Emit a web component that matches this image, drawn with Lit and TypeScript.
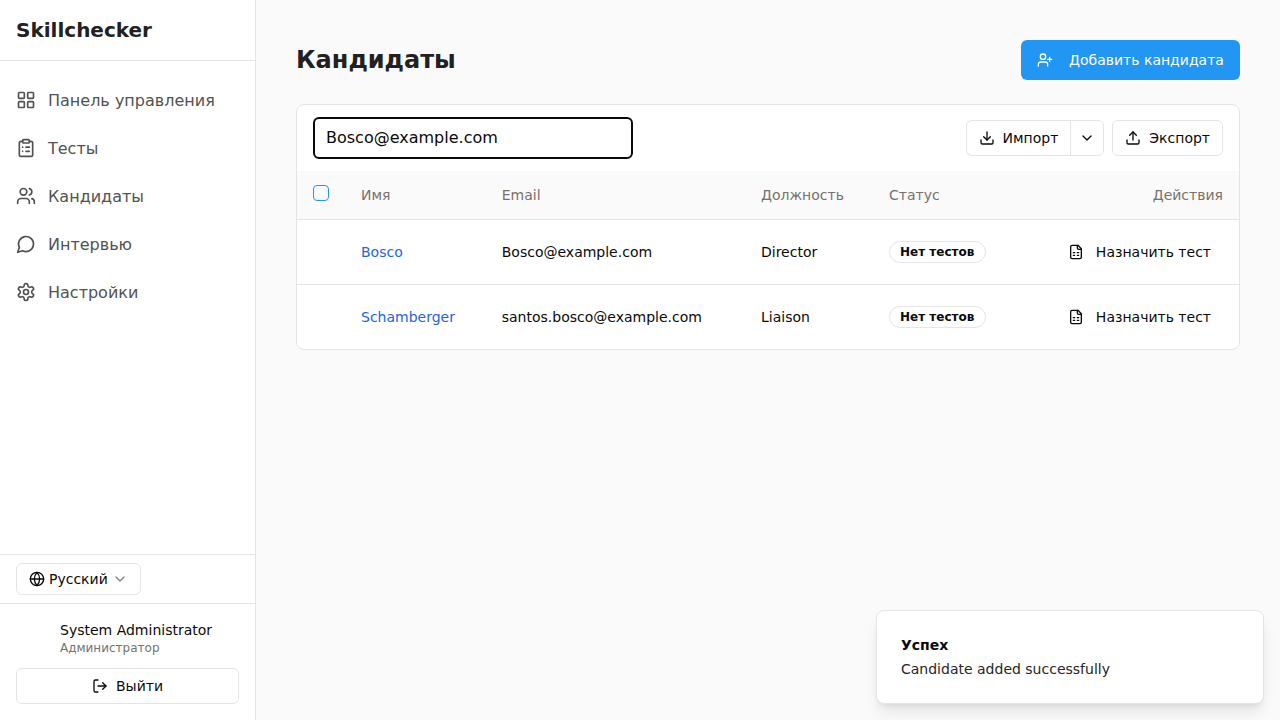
import { LitElement, css, html, svg } from "lit";
import { customElement } from "lit/decorators.js";

const icon = (body: unknown, size = 20) => html`<svg
  class="icon"
  width=${size}
  height=${size}
  viewBox="0 0 24 24"
  fill="none"
  stroke="currentColor"
  stroke-width="2"
  stroke-linecap="round"
  stroke-linejoin="round"
>${body}</svg>`;

const icons = {
  grid: svg`<rect x="3" y="3" width="7" height="7" rx="1"/><rect x="14" y="3" width="7" height="7" rx="1"/><rect x="3" y="14" width="7" height="7" rx="1"/><rect x="14" y="14" width="7" height="7" rx="1"/>`,
  clipboard: svg`<rect x="8" y="2" width="8" height="4" rx="1"/><path d="M16 4h2a2 2 0 0 1 2 2v14a2 2 0 0 1-2 2H6a2 2 0 0 1-2-2V6a2 2 0 0 1 2-2h2"/><path d="M12 11h4M12 16h4M8 11h.01M8 16h.01"/>`,
  users: svg`<path d="M16 21v-2a4 4 0 0 0-4-4H6a4 4 0 0 0-4 4v2"/><circle cx="9" cy="7" r="4"/><path d="M22 21v-2a4 4 0 0 0-3-3.87"/><path d="M16 3.13a4 4 0 0 1 0 7.75"/>`,
  chat: svg`<path d="M7.9 20A9 9 0 1 0 4 16.1L2 22Z"/>`,
  gear: svg`<path d="M12.22 2h-.44a2 2 0 0 0-2 2v.18a2 2 0 0 1-1 1.73l-.43.25a2 2 0 0 1-2 0l-.15-.08a2 2 0 0 0-2.73.73l-.22.38a2 2 0 0 0 .73 2.73l.15.1a2 2 0 0 1 1 1.72v.51a2 2 0 0 1-1 1.74l-.15.09a2 2 0 0 0-.73 2.73l.22.38a2 2 0 0 0 2.73.73l.15-.08a2 2 0 0 1 2 0l.43.25a2 2 0 0 1 1 1.73V20a2 2 0 0 0 2 2h.44a2 2 0 0 0 2-2v-.18a2 2 0 0 1 1-1.73l.43-.25a2 2 0 0 1 2 0l.15.08a2 2 0 0 0 2.73-.73l.22-.39a2 2 0 0 0-.73-2.73l-.15-.08a2 2 0 0 1-1-1.74v-.5a2 2 0 0 1 1-1.74l.15-.09a2 2 0 0 0 .73-2.73l-.22-.38a2 2 0 0 0-2.73-.73l-.15.08a2 2 0 0 1-2 0l-.43-.25a2 2 0 0 1-1-1.73V4a2 2 0 0 0-2-2z"/><circle cx="12" cy="12" r="3"/>`,
  globe: svg`<circle cx="12" cy="12" r="10"/><path d="M2 12h20"/><path d="M12 2a15.3 15.3 0 0 1 4 10 15.3 15.3 0 0 1-4 10 15.3 15.3 0 0 1-4-10 15.3 15.3 0 0 1 4-10z"/>`,
  chevron: svg`<path d="m6 9 6 6 6-6"/>`,
  logout: svg`<path d="M9 21H5a2 2 0 0 1-2-2V5a2 2 0 0 1 2-2h4"/><path d="m16 17 5-5-5-5"/><path d="M21 12H9"/>`,
  userPlus: svg`<path d="M16 21v-2a4 4 0 0 0-4-4H6a4 4 0 0 0-4 4v2"/><circle cx="9" cy="7" r="4"/><path d="M19 8v6M22 11h-6"/>`,
  download: svg`<path d="M21 15v4a2 2 0 0 1-2 2H5a2 2 0 0 1-2-2v-4"/><path d="m7 10 5 5 5-5"/><path d="M12 15V3"/>`,
  upload: svg`<path d="M21 15v4a2 2 0 0 1-2 2H5a2 2 0 0 1-2-2v-4"/><path d="m17 8-5-5-5 5"/><path d="M12 3v12"/>`,
  sheet: svg`<path d="M15 2H6a2 2 0 0 0-2 2v16a2 2 0 0 0 2 2h12a2 2 0 0 0 2-2V7Z"/><path d="M14 2v4a2 2 0 0 0 2 2h4"/><path d="M8 13h2M14 13h2M8 17h2M14 17h2"/>`,
};

const NAV = [
  { label: "Панель управления", icon: icons.grid },
  { label: "Тесты", icon: icons.clipboard },
  { label: "Кандидаты", icon: icons.users },
  { label: "Интервью", icon: icons.chat },
  { label: "Настройки", icon: icons.gear },
];

const CANDIDATES = [
  { name: "Bosco", email: "Bosco@example.com", job: "Director" },
  { name: "Schamberger", email: "santos.bosco@example.com", job: "Liaison" },
];

@customElement("app-root")
export class AppRoot extends LitElement {
  static styles = css`
    :host {
      display: flex;
      height: 720px;
      overflow: hidden;
      position: relative;
      background: #fafafa;
      color: #0a0a0a;
      font-family: "DejaVu Sans", sans-serif;
      font-size: 14px;
    }

    .icon {
      flex: none;
      display: block;
    }

    button {
      font: inherit;
      color: inherit;
      background: #fff;
      cursor: pointer;
    }

    .sidebar {
      box-sizing: border-box;
      width: 256px;
      flex: none;
      display: flex;
      flex-direction: column;
      background: #fff;
      border-right: 1px solid #e5e5e5;
    }

    .brand {
      box-sizing: border-box;
      height: 61px;
      padding: 0 16px;
      display: flex;
      align-items: center;
      border-bottom: 1px solid #e5e5e5;
      font-size: 20px;
      font-weight: 700;
      color: #212121;
    }

    .nav {
      flex: 1;
      padding-top: 15px;
      display: flex;
      flex-direction: column;
    }

    .nav-item {
      height: 48px;
      padding: 0 16px;
      display: flex;
      align-items: center;
      gap: 12px;
      font-size: 16px;
      color: #525252;
    }

    .lang-row {
      box-sizing: border-box;
      height: 50px;
      padding: 0 16px;
      display: flex;
      align-items: center;
      border-top: 1px solid #e5e5e5;
      border-bottom: 1px solid #e5e5e5;
    }

    .lang {
      box-sizing: border-box;
      width: 125px;
      height: 32px;
      display: flex;
      align-items: center;
      padding: 0 12px;
      gap: 4px;
      border: 1px solid #e5e5e5;
      border-radius: 6px;
    }

    .lang .caret {
      opacity: 0.5;
    }

    .user {
      padding: 18px 16px 16px;
    }

    .user-name {
      padding-left: 44px;
      line-height: 17px;
    }

    .user-role {
      padding-left: 44px;
      margin-top: 1px;
      font-size: 12px;
      line-height: 16px;
      color: #737373;
    }

    .logout {
      box-sizing: border-box;
      width: 223px;
      height: 36px;
      margin-top: 12px;
      display: flex;
      align-items: center;
      justify-content: center;
      gap: 8px;
      border: 1px solid #e5e5e5;
      border-radius: 6px;
    }

    .main {
      flex: 1;
      min-width: 0;
      padding: 40px 40px 0;
    }

    .head {
      display: flex;
      align-items: center;
      justify-content: space-between;
      height: 40px;
      margin-bottom: 24px;
    }

    h1 {
      margin: 0;
      font-size: 24px;
      font-weight: 700;
      color: #212121;
    }

    .add {
      box-sizing: border-box;
      width: 219px;
      height: 40px;
      padding: 0 16px;
      display: flex;
      align-items: center;
      gap: 16px;
      color: #fff;
      background: #2196f3;
      border: 0;
      border-radius: 6px;
    }

    .card {
      background: #fff;
      border: 1px solid #e5e5e5;
      border-radius: 8px;
      overflow: hidden;
    }

    .toolbar {
      height: 66px;
      padding: 12px 16px 0;
      box-sizing: border-box;
      display: flex;
      justify-content: space-between;
    }

    .search {
      box-sizing: border-box;
      width: 320px;
      height: 42px;
      padding: 0 11px 2px;
      display: flex;
      align-items: center;
      border: 2px solid #0a0a0a;
      border-radius: 6px;
      font-size: 16px;
    }

    .actions {
      display: flex;
      gap: 8px;
      padding-top: 3px;
    }

    .btn-group {
      display: flex;
    }

    .btn {
      box-sizing: border-box;
      height: 36px;
      padding: 0 12px;
      display: flex;
      align-items: center;
      gap: 8px;
      border: 1px solid #e5e5e5;
      border-radius: 6px;
    }

    .btn.left {
      border-radius: 6px 0 0 6px;
      border-right: 0;
    }

    .btn.right {
      padding: 0 8px;
      border-radius: 0 6px 6px 0;
    }

    table {
      width: 100%;
      border-collapse: collapse;
      table-layout: fixed;
    }

    .col-check {
      width: 48px;
    }

    .col-name {
      width: 140.75px;
    }

    .col-email {
      width: 259.25px;
    }

    .col-job {
      width: 128px;
    }

    th {
      height: 48px;
      padding: 0 16px;
      background: #fafafa;
      border-bottom: 1px solid #e5e5e5;
      text-align: left;
      font-weight: 400;
      color: #78716c;
    }

    td {
      height: 64px;
      padding: 0 16px;
      border-bottom: 1px solid #e5e5e5;
      white-space: nowrap;
    }

    tr:last-child td {
      border-bottom: 0;
    }

    .split {
      display: flex;
      justify-content: space-between;
      align-items: center;
    }

    .check {
      display: block;
      box-sizing: border-box;
      width: 16px;
      height: 16px;
      margin-top: -4px;
      border: 1px solid #2196f3;
      border-radius: 4px;
    }

    .link {
      color: #2563eb;
    }

    .badge {
      display: block;
      box-sizing: border-box;
      height: 22px;
      line-height: 20px;
      padding: 0 11px 0 10px;
      border: 1px solid #e5e5e5;
      border-radius: 999px;
      font-size: 12px;
      font-weight: 700;
    }

    .assign {
      display: flex;
      align-items: center;
      gap: 12px;
      padding-right: 12px;
    }

    .toast {
      position: absolute;
      right: 16px;
      bottom: 16px;
      box-sizing: border-box;
      width: 388px;
      height: 94px;
      padding: 0 24px;
      display: flex;
      flex-direction: column;
      justify-content: center;
      gap: 6px;
      background: #fff;
      border: 1px solid #e5e5e5;
      border-radius: 8px;
      box-shadow: 0 10px 15px -3px rgba(0, 0, 0, 0.1), 0 4px 6px -4px rgba(0, 0, 0, 0.1);
    }

    .toast-title {
      font-weight: 700;
      line-height: 18px;
    }

    .toast-text {
      line-height: 18px;
      color: #262626;
    }
  `;

  render() {
    return html`
      <aside class="sidebar">
        <div class="brand">Skillchecker</div>
        <nav class="nav">
          ${NAV.map(
            (item) => html`<div class="nav-item">${icon(item.icon)}<span>${item.label}</span></div>`
          )}
        </nav>
        <div class="lang-row">
          <button class="lang">
            ${icon(icons.globe, 16)}<span>Русский</span><span class="caret">${icon(icons.chevron, 16)}</span>
          </button>
        </div>
        <div class="user">
          <div class="user-name">System Administrator</div>
          <div class="user-role">Администратор</div>
          <button class="logout">${icon(icons.logout, 16)}<span>Выйти</span></button>
        </div>
      </aside>
      <main class="main">
        <div class="head">
          <h1>Кандидаты</h1>
          <button class="add">${icon(icons.userPlus, 16)}<span>Добавить кандидата</span></button>
        </div>
        <section class="card">
          <div class="toolbar">
            <div class="search">Bosco@example.com</div>
            <div class="actions">
              <div class="btn-group">
                <button class="btn left">${icon(icons.download, 16)}<span>Импорт</span></button>
                <button class="btn right">${icon(icons.chevron, 16)}</button>
              </div>
              <button class="btn">${icon(icons.upload, 16)}<span>Экспорт</span></button>
            </div>
          </div>
          <table>
            <colgroup>
              <col class="col-check" />
              <col class="col-name" />
              <col class="col-email" />
              <col class="col-job" />
              <col />
            </colgroup>
            <thead>
              <tr>
                <th><span class="check"></span></th>
                <th>Имя</th>
                <th>Email</th>
                <th>Должность</th>
                <th><div class="split"><span>Статус</span><span>Действия</span></div></th>
              </tr>
            </thead>
            <tbody>
              ${CANDIDATES.map(
                (c) => html`<tr>
                  <td></td>
                  <td class="link">${c.name}</td>
                  <td>${c.email}</td>
                  <td>${c.job}</td>
                  <td>
                    <div class="split">
                      <span class="badge">Нет тестов</span>
                      <span class="assign">${icon(icons.sheet, 16)}<span>Назначить тест</span></span>
                    </div>
                  </td>
                </tr>`
              )}
            </tbody>
          </table>
        </section>
      </main>
      <div class="toast">
        <div class="toast-title">Успех</div>
        <div class="toast-text">Candidate added successfully</div>
      </div>
    `;
  }
}
